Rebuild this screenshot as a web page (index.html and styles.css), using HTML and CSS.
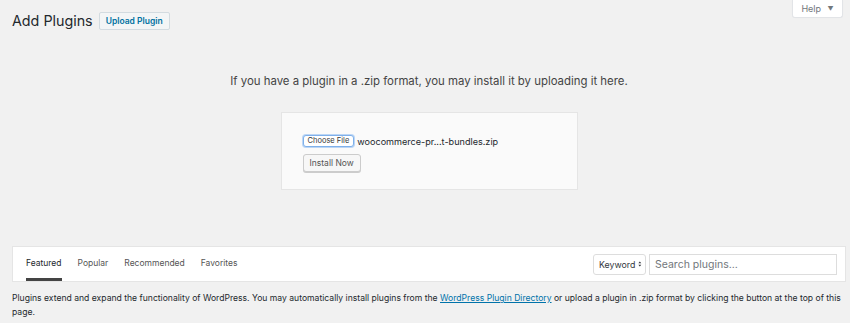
FILE: index.html
```html
<!DOCTYPE html>
<html lang="en">
<head>
    <meta charset="UTF-8">
    <meta name="viewport" content="width=device-width, initial-scale=1.0">
    <title>Add Plugins</title>
    <link rel="stylesheet" href="styles.css">
</head>
<body>
    <div class="wrap">
        <!-- Title row with help tab -->
        <div class="top-row">
            <div class="title-group">
                <h1>Add Plugins</h1>
                <a href="#" class="title-action">Upload Plugin</a>
            </div>
            <button type="button" class="help-tab">Help <span class="help-arrow">&#9660;</span></button>
        </div>

        <!-- Upload form -->
        <div class="upload-plugin">
            <p class="install-help">If you have a plugin in a .zip format, you may install it by uploading it here.</p>
            <form class="upload-form">
                <div class="file-row">
                    <span class="file-button">Choose File</span>
                    <span class="file-name">woocommerce-pr...t-bundles.zip</span>
                </div>
                <button type="button" class="install-button">Install Now</button>
            </form>
        </div>

        <!-- Filter tabs and search -->
        <div class="filter-bar">
            <ul class="filter-links">
                <li class="current">Featured</li>
                <li>Popular</li>
                <li>Recommended</li>
                <li>Favorites</li>
            </ul>
            <div class="search-form">
                <span class="search-type">Keyword
                    <svg class="select-arrows" width="5" height="8" viewBox="0 0 5 8">
                        <path d="M2.5 0.5 L4.5 3 L0.5 3 Z M2.5 7.5 L4.5 5 L0.5 5 Z" fill="#32373c"/>
                    </svg>
                </span>
                <input type="search" class="search-input" placeholder="Search plugins...">
            </div>
        </div>

        <p class="intro">Plugins extend and expand the functionality of WordPress. You may automatically install plugins from the <a href="#">WordPress Plugin Directory</a> or upload a plugin in .zip format by clicking the button at the top of this page.</p>
    </div>
</body>
</html>
```

FILE: styles.css
```css
body {
    font-family: Inter, "Liberation Sans", sans-serif;
    background-color: #f1f1f1;
    color: #23282d;
    margin: 0;
    padding: 0;
}

.wrap {
    padding: 0 4px 0 12px;
}

.top-row {
    display: flex;
    justify-content: space-between;
    align-items: flex-start;
    height: 45px;
}

.title-group {
    display: flex;
    align-items: center;
    margin-top: 12px;
}

h1 {
    font-size: 14.3px;
    font-weight: 400;
    margin: 0 6px 0 0;
    color: #23282d;
    line-height: 18px;
}

.title-action {
    display: block;
    font-size: 8.5px;
    font-weight: 600;
    color: #0071a1;
    text-decoration: none;
    background-color: #f3f5f6;
    border: 1px solid #d3dbe0;
    border-radius: 2px;
    padding: 3px 6px;
    line-height: 10px;
}

.help-tab {
    font-family: inherit;
    font-size: 9px;
    color: #72777c;
    background-color: #fff;
    border: 1px solid #e2e4e7;
    border-top: none;
    border-radius: 0 0 3px 3px;
    margin-right: 3px;
    width: 51px;
    height: 18px;
    padding: 0;
    box-shadow: 0 0 1px rgba(0, 0, 0, 0.04);
}

.help-arrow {
    font-size: 6px;
    margin-left: 4px;
    vertical-align: 1px;
}

.upload-plugin {
    display: flex;
    flex-direction: column;
    align-items: center;
    padding-top: 28px;
}

.install-help {
    font-size: 11.4px;
    color: #444;
    margin: 0 0 22px 0;
    line-height: 17px;
}

.upload-form {
    width: 253px;
    padding: 22px 21px 17px 21px;
    background-color: #fafafa;
    border: 1px solid #e5e5e5;
}

.file-row {
    display: flex;
    align-items: center;
    margin-bottom: 3px;
}

.file-button {
    font-size: 7.5px;
    color: #333;
    border: 1px solid #7fb0ea;
    border-radius: 3px;
    background-color: #fff;
    box-shadow: 0 0 0 1px #bcd6f5;
    padding: 1px 4px;
    line-height: 8px;
    margin-right: 3px;
}

.file-name {
    font-size: 9.1px;
    color: #23282d;
}

.install-button {
    font-family: inherit;
    font-size: 8.5px;
    color: #555;
    background-color: #f7f7f7;
    border: 1px solid #cccccc;
    border-radius: 3px;
    box-shadow: 0 1px 0 #ccc;
    padding: 0 6px;
    height: 18px;
}

.filter-bar {
    display: flex;
    justify-content: space-between;
    align-items: center;
    background-color: #fff;
    border: 1px solid #e5e5e5;
    margin-top: 56px;
    height: 34px;
    padding: 0 8px 0 13px;
}

.filter-links {
    display: flex;
    list-style: none;
    margin: 0;
    padding: 0;
    height: 100%;
    gap: 16px;
}

.filter-links li {
    font-size: 8.5px;
    color: #555;
    display: flex;
    align-items: center;
    border-bottom: 3px solid transparent;
    padding-top: 1px;
}

.filter-links li.current {
    color: #23282d;
    border-bottom-color: #444;
}

.search-form {
    display: flex;
    align-items: center;
    gap: 3px;
}

.search-type {
    display: flex;
    align-items: center;
    font-size: 8.8px;
    color: #32373c;
    background-color: #fff;
    border: 1px solid #ddd;
    border-radius: 3px;
    height: 21px;
    padding: 0 3px 0 5px;
    box-sizing: border-box;
    width: 53px;
}

.select-arrows {
    margin-left: 3px;
}

.search-input {
    font-family: inherit;
    font-size: 10.5px;
    width: 188px;
    height: 21px;
    box-sizing: border-box;
    border: 1px solid #ddd;
    padding: 0 5px;
    color: #32373c;
}

.search-input::placeholder {
    color: #72777c;
}

.intro {
    font-size: 8.6px;
    line-height: 14px;
    color: #23282d;
    margin: 9px 0 0 0;
}

.intro a {
    color: #0073aa;
}
```
